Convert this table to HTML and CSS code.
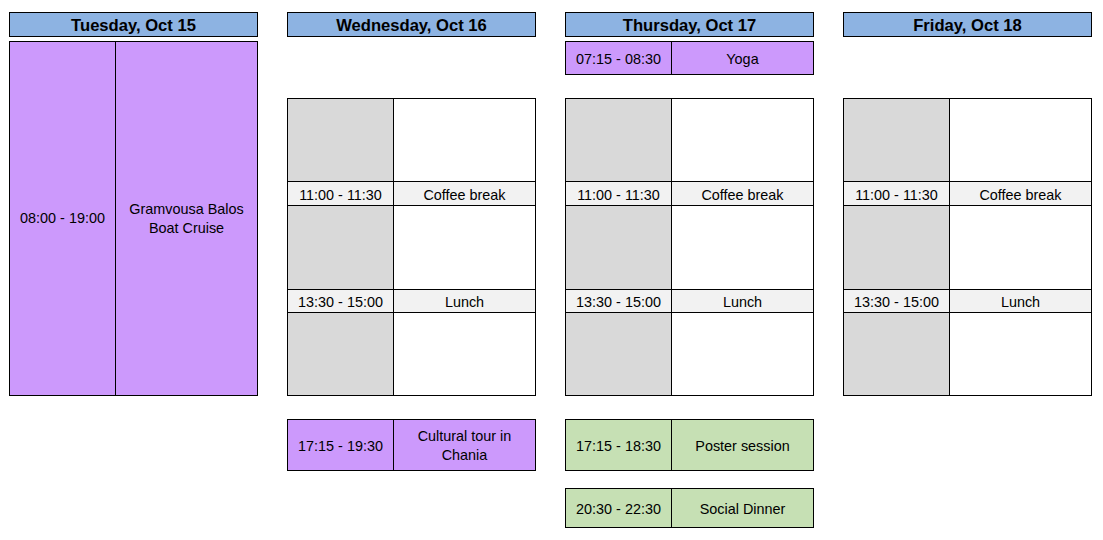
FILE: index.html
```html
<!DOCTYPE html>
<html>
<head>
<meta charset="utf-8">
<link rel="stylesheet" href="styles.css">
</head>
<body>
<div class="page">
  <div class="day">
    <div class="head">Tuesday, Oct 15</div>
    <div class="block purple cruise">
      <div class="cell time">08:00 - 19:00</div>
      <div class="cell name">Gramvousa Balos Boat Cruise</div>
    </div>
  </div>

  <div class="day">
    <div class="head">Wednesday, Oct 16</div>
    <div class="sched sched-gap">
      <div class="cell time gray r-a1"></div><div class="cell name white r-a1"></div>
      <div class="cell time light r-b1 bt">11:00 - 11:30</div><div class="cell name light r-b1 bt">Coffee break</div>
      <div class="cell time gray r-a2 bt"></div><div class="cell name white r-a2 bt"></div>
      <div class="cell time light r-b2 bt">13:30 - 15:00</div><div class="cell name light r-b2 bt">Lunch</div>
      <div class="cell time gray r-a3 bt"></div><div class="cell name white r-a3 bt"></div>
    </div>
    <div class="block purple evening">
      <div class="cell time">17:15 - 19:30</div>
      <div class="cell name">Cultural tour in Chania</div>
    </div>
  </div>

  <div class="day">
    <div class="head">Thursday, Oct 17</div>
    <div class="block purple yoga">
      <div class="cell time">07:15 - 08:30</div>
      <div class="cell name">Yoga</div>
    </div>
    <div class="sched sched-after">
      <div class="cell time gray r-a1"></div><div class="cell name white r-a1"></div>
      <div class="cell time light r-b1 bt">11:00 - 11:30</div><div class="cell name light r-b1 bt">Coffee break</div>
      <div class="cell time gray r-a2 bt"></div><div class="cell name white r-a2 bt"></div>
      <div class="cell time light r-b2 bt">13:30 - 15:00</div><div class="cell name light r-b2 bt">Lunch</div>
      <div class="cell time gray r-a3 bt"></div><div class="cell name white r-a3 bt"></div>
    </div>
    <div class="block green evening">
      <div class="cell time">17:15 - 18:30</div>
      <div class="cell name">Poster session</div>
    </div>
    <div class="block green dinner">
      <div class="cell time">20:30 - 22:30</div>
      <div class="cell name">Social Dinner</div>
    </div>
  </div>

  <div class="day">
    <div class="head">Friday, Oct 18</div>
    <div class="sched sched-gap">
      <div class="cell time gray r-a1"></div><div class="cell name white r-a1"></div>
      <div class="cell time light r-b1 bt">11:00 - 11:30</div><div class="cell name light r-b1 bt">Coffee break</div>
      <div class="cell time gray r-a2 bt"></div><div class="cell name white r-a2 bt"></div>
      <div class="cell time light r-b2 bt">13:30 - 15:00</div><div class="cell name light r-b2 bt">Lunch</div>
      <div class="cell time gray r-a3 bt"></div><div class="cell name white r-a3 bt"></div>
    </div>
  </div>
</div>
</body>
</html>
```

FILE: styles.css
```css
* { box-sizing: border-box; }
html, body { margin: 0; padding: 0; background: #fff; }
body {
  font-family: "Liberation Sans", Arial, sans-serif;
  font-size: 14.4px;
  color: #000;
}
.page {
  display: flex;
  gap: 29px;
  padding: 12px 0 0 9px;
  width: 1103px;
  height: 540px;
}
.day {
  width: 249px;
  display: flex;
  flex-direction: column;
}
.head {
  height: 25px;
  border: 1px solid #000;
  background: #8db3e2;
  font-weight: bold;
  font-size: 16.6px;
  padding-top: 2px;
  display: flex;
  align-items: center;
  justify-content: center;
}
.block {
  display: grid;
  grid-template-columns: 106px 1fr;
  border: 1px solid #000;
}
.cell {
  display: flex;
  align-items: center;
  justify-content: center;
  text-align: center;
  line-height: 19px;
  padding: 2px 3px 0;
}
.block .time { border-right: 1px solid #000; }
.purple { background: #cc99fc; }
.green { background: #c6e0b4; }

.cruise { margin-top: 4px; height: 355px; }
.cruise .cell { padding-top: 0; }
.yoga { margin-top: 4px; height: 34px; }
.evening { margin-top: 23px; height: 52px; }
.dinner { margin-top: 17px; height: 40px; }

.sched {
  display: grid;
  grid-template-columns: 106px 1fr;
  grid-template-rows: 82px 24px 84px 23px 83px;
  border: 1px solid #000;
  height: 298px;
}
.sched-gap { margin-top: 61px; }
.sched-after { margin-top: 23px; }
.sched .time { border-right: 1px solid #000; }
.sched .bt { border-top: 1px solid #000; }
.gray { background: #d9d9d9; }
.white { background: #fff; }
.light { background: #f2f2f2; line-height: 16px; }
```
